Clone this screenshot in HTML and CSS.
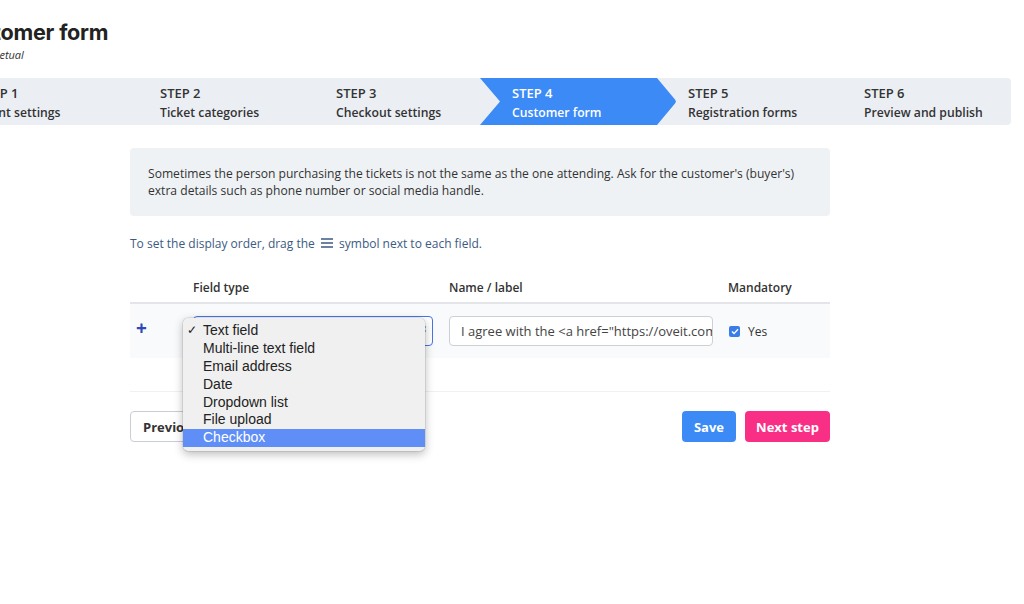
FILE: index.html
```html
<!DOCTYPE html>
<html lang="en">

<head>
	<meta charset="UTF-8">
	<meta name="viewport" content="width=device-width, initial-scale=1.0">
	<title>Customer form</title>
	<link rel="stylesheet" href="styles.css">
</head>

<body>

	<div class="wrap">
		<div class="head">
			<h1>Customer form</h1>
			<p class="sub">Perpetual</p>
		</div>

		<div class="steps">
			<div class="step first"><b>STEP 1</b><span>Event settings</span></div>
			<div class="step"><b>STEP 2</b><span>Ticket categories</span></div>
			<div class="step"><b>STEP 3</b><span>Checkout settings</span></div>
			<div class="step active"><b>STEP 4</b><span>Customer form</span></div>
			<div class="step"><b>STEP 5</b><span>Registration forms</span></div>
			<div class="step"><b>STEP 6</b><span>Preview and publish</span></div>
		</div>

		<div class="main">
			<div class="info">
				Sometimes the person purchasing the tickets is not the same as the one attending. Ask for the customer's (buyer's)
				extra details such as phone number or social media handle.
			</div>

			<p class="hint">To set the display order, drag the
				<svg class="bars" width="12" height="10" viewBox="0 0 12 10"><path d="M0 1h12M0 5h12M0 9h12" stroke="#3b5b82" stroke-width="1.6"/></svg>
				symbol next to each field.</p>

			<div class="table">
				<div class="thead">
					<div class="c-move"></div>
					<div class="c-type">Field type</div>
					<div class="c-name">Name / label</div>
					<div class="c-req">Mandatory</div>
				</div>
				<div class="row">
					<div class="c-move plus">+</div>
					<div class="c-type">
						<div class="select">Text field<span class="arrows">&#8661;</span></div>
					</div>
					<div class="c-name">
						<div class="input">I agree with the &lt;a href="https://oveit.com/terms"&gt;terms&lt;/a&gt;</div>
					</div>
					<div class="c-req">
						<span class="check"><svg width="8" height="7" viewBox="0 0 8 7"><path d="M1 3.6l2 2L7 1.2" fill="none" stroke="#fff" stroke-width="1.4"/></svg></span>
						Yes
					</div>
				</div>
			</div>

			<div class="actions">
				<button class="btn btn-prev">Previous step</button>
				<div class="right">
					<button class="btn btn-save">Save</button>
					<button class="btn btn-next">Next step</button>
				</div>
			</div>

			<ul class="menu">
				<li class="sel">Text field</li>
				<li>Multi-line text field</li>
				<li>Email address</li>
				<li>Date</li>
				<li>Dropdown list</li>
				<li>File upload</li>
				<li class="hl">Checkbox</li>
			</ul>
		</div>
	</div>

</body>

</html>
```

FILE: styles.css
```css
*,
*::before,
*::after {
	box-sizing: border-box;
}

body {
	margin: 0;
	padding: 0;
	min-height: 604px;
	font-family: "Open Sans", sans-serif;
	background-color: white;
	color: #333;
}

.wrap {
	width: 1059px;
	margin-left: -48px;
}

.head {
	height: 78px;
	padding-top: 18px;
}

h1 {
	margin: 0;
	font-family: Inter, sans-serif;
	font-size: 21.6px;
	font-weight: 700;
	letter-spacing: -0.2px;
	line-height: 28px;
	color: #222;
}

.sub {
	margin: 1px 0 0 25px;
	font-size: 11px;
	font-style: italic;
	color: #333;
}

.steps {
	display: flex;
	height: 47px;
	background-color: #ebeff3;
	border-radius: 0 4px 4px 0;
}

.step {
	position: relative;
	width: 176px;
	padding: 7px 0 0 32px;
	display: flex;
	flex-direction: column;
	font-size: 12.2px;
	font-weight: 600;
	color: #333;
}

.step.first {
	padding-left: 26px;
}

.step b {
	font-size: 13px;
	font-weight: 600;
	line-height: 17px;
}

.step span {
	margin-top: 2px;
	line-height: 17px;
}

.step > * {
	position: relative;
}

.step.active {
	color: white;
}

.step.active::before {
	content: "";
	position: absolute;
	top: 0;
	left: 0;
	width: 197px;
	height: 100%;
	background-color: #3b8af6;
	clip-path: polygon(0 0, 177px 0, 195px 46%, 196px 50%, 195px 54%, 177px 100%, 0 100%, 20px 50%);
}

.main {
	position: relative;
	width: 700px;
	margin: 23px 0 0 178px;
}

.info {
	background-color: #eff2f5;
	border-radius: 4px;
	padding: 17px 18px 16px;
	font-size: 12.1px;
	line-height: 17px;
	height: 68px;
}

.hint {
	margin: 19px 0 0;
	font-size: 12px;
	color: #3b5b82;
	line-height: 17px;
}

.bars {
	margin: 0 3px;
}

.table {
	margin-top: 16px;
}

.thead,
.row {
	display: flex;
	align-items: center;
}

.thead {
	height: 36px;
	font-size: 12px;
	font-weight: 600;
	border-bottom: 2px solid #e3e5e8;
	padding-top: 5px;
}

.row {
	height: 54px;
	background-color: #f9fafb;
}

.c-move {
	width: 63px;
}

.c-type {
	width: 256px;
}

.c-name {
	width: 279px;
}

.c-req {
	display: flex;
	align-items: center;
	font-size: 12px;
}

.plus {
	padding-left: 6px;
	margin-top: -6px;
	font-size: 19px;
	font-weight: 700;
	color: #2f47b8;
}

.select {
	width: 240px;
	height: 30px;
	border: 1px solid #4a72e8;
	border-radius: 4px;
	background-color: white;
	font-family: "Liberation Sans", sans-serif;
	font-size: 13px;
	padding: 6px 10px;
	position: relative;
}

.arrows {
	position: absolute;
	right: 4px;
	top: 6px;
	font-size: 11px;
	color: #555;
}

.input {
	width: 264px;
	height: 30px;
	border: 1px solid #ccd1d6;
	border-radius: 4px;
	background-color: white;
	font-size: 13px;
	padding: 5px 11px;
	white-space: nowrap;
	overflow: hidden;
	color: #444;
}

.check {
	display: inline-flex;
	align-items: center;
	justify-content: center;
	width: 11px;
	height: 11px;
	margin: 0 8px 0 1px;
	background-color: #3b7de8;
	border-radius: 2px;
}

.actions {
	margin-top: 33px;
	border-top: 1px solid #f0f1f3;
	padding-top: 19px;
	display: flex;
	justify-content: space-between;
}

.right {
	display: flex;
	gap: 9px;
}

.btn {
	height: 31px;
	border-radius: 4px;
	font-family: "Open Sans", sans-serif;
	font-size: 13px;
	font-weight: 700;
	padding: 0 12px;
	border: 1px solid transparent;
}

.btn-prev {
	background-color: white;
	border-color: #c9ced4;
	color: #333;
}

.btn-save {
	background-color: #3b8af6;
	color: white;
	width: 54px;
	padding: 0;
}

.btn-next {
	background-color: #f92f85;
	color: white;
	width: 85px;
	padding: 0;
}

.menu {
	position: absolute;
	left: 53px;
	top: 170px;
	width: 242px;
	margin: 0;
	padding: 4px 0 4px;
	list-style: none;
	background-color: #f0f0f0;
	border-radius: 5px;
	box-shadow: 0 3px 10px rgba(0, 0, 0, 0.28), 0 0 0 0.5px rgba(0, 0, 0, 0.15);
	font-family: "Liberation Sans", sans-serif;
	font-size: 14px;
	color: #222;
}

.menu li {
	height: 17.9px;
	line-height: 17.9px;
	padding-left: 20px;
	position: relative;
}

.menu li.sel::before {
	content: "\2713";
	position: absolute;
	left: 4px;
	font-size: 12px;
}

.menu li.hl {
	background-color: #5f8ff6;
	color: white;
}
```
